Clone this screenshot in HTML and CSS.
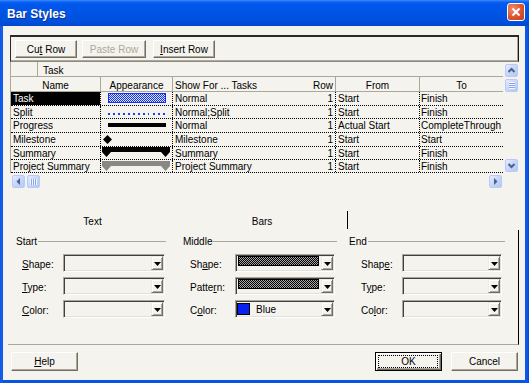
FILE: index.html
```html
<!DOCTYPE html>
<html>
<head>
<meta charset="utf-8">
<title>Bar Styles</title>
<link rel="stylesheet" href="styles.css">
</head>
<body>
<div class="window">
  <div class="titlebar">
    <span class="title">Bar Styles</span>
    <span class="close"><svg width="10" height="10" viewBox="0 0 10 10"><path d="M1.5 1.5L8.5 8.5M8.5 1.5L1.5 8.5" stroke="#fff" stroke-width="2" fill="none"/></svg></span>
  </div>
  <div class="client">
    <div class="toolbar">
      <div class="btn b-cut">Cu<u>t</u> Row</div>
      <div class="btn b-paste disabled">Paste Row</div>
      <div class="btn b-insert"><u>I</u>nsert Row</div>
    </div>

    <div class="gridwrap">
      <div class="grid">
        <div class="hrow">
          <div class="hc c-corner"></div>
          <div class="hc c-group">Task</div>
        </div>
        <div class="hrow">
          <div class="hc c-name center">Name</div>
          <div class="hc c-app center">Appearance</div>
          <div class="hc c-show noborder">Show For ... Tasks</div>
          <div class="hc c-row hright">Row</div>
          <div class="hc c-from center">From</div>
          <div class="hc c-to center noborder">To</div>
        </div>

        <div class="drow h14">
          <div class="dc c-name sel">Task</div>
          <div class="dc c-app"><div class="bar-task"></div></div>
          <div class="dc c-show noborder">Normal</div>
          <div class="dc c-row right">1</div>
          <div class="dc c-from">Start</div>
          <div class="dc c-to noborder">Finish</div>
        </div>
        <div class="drow">
          <div class="dc c-name">Split</div>
          <div class="dc c-app split"><div class="dots d1"></div><div class="dots d2"></div></div>
          <div class="dc c-show noborder">Normal;Split</div>
          <div class="dc c-row right">1</div>
          <div class="dc c-from">Start</div>
          <div class="dc c-to noborder">Finish</div>
        </div>
        <div class="drow h14">
          <div class="dc c-name">Progress</div>
          <div class="dc c-app"><div class="bar-progress"></div></div>
          <div class="dc c-show noborder">Normal</div>
          <div class="dc c-row right">1</div>
          <div class="dc c-from">Actual Start</div>
          <div class="dc c-to noborder">CompleteThrough</div>
        </div>
        <div class="drow h14">
          <div class="dc c-name">Milestone</div>
          <div class="dc c-app"><svg class="milestone" width="9" height="9" viewBox="0 0 9 9"><polygon points="4.5,0 9,4.5 4.5,9 0,4.5" fill="#000"/></svg></div>
          <div class="dc c-show noborder">Milestone</div>
          <div class="dc c-row right">1</div>
          <div class="dc c-from">Start</div>
          <div class="dc c-to noborder">Start</div>
        </div>
        <div class="drow">
          <div class="dc c-name">Summary</div>
          <div class="dc c-app"><svg class="summary" width="68" height="10" viewBox="0 0 68 10"><path d="M0 0H68V5L63.5 10L59 5H9L4.5 10L0 5Z" fill="#000"/></svg></div>
          <div class="dc c-show noborder">Summary</div>
          <div class="dc c-row right">1</div>
          <div class="dc c-from">Start</div>
          <div class="dc c-to noborder">Finish</div>
        </div>
        <div class="drow">
          <div class="dc c-name">Project Summary</div>
          <div class="dc c-app"><svg class="summary psum" width="68" height="10" viewBox="0 0 68 10"><path d="M0 0H68V5L63.5 10L59 5H9L4.5 10L0 5Z" fill="#8a8885"/></svg></div>
          <div class="dc c-show noborder">Project Summary</div>
          <div class="dc c-row right">1</div>
          <div class="dc c-from">Start</div>
          <div class="dc c-to noborder">Finish</div>
        </div>
      </div>

      <div class="vscroll">
        <div class="sb"><svg width="9" height="9" viewBox="0 0 9 9"><polyline points="1.5,6 4.5,3 7.5,6" stroke="#4d6185" stroke-width="2" fill="none"/></svg></div>
        <div class="sb thumb"><div class="grip-h"></div></div>
        <div class="track"></div>
        <div class="sb"><svg width="9" height="9" viewBox="0 0 9 9"><polyline points="1.5,3 4.5,6 7.5,3" stroke="#4d6185" stroke-width="2" fill="none"/></svg></div>
      </div>
    </div>

    <div class="hscroll">
      <div class="sb"><svg width="9" height="9" viewBox="0 0 9 9"><polygon points="6,1 2.5,4.5 6,8" fill="#4d6185"/></svg></div>
      <div class="sb thumb-h"><div class="grip-v"></div></div>
      <div class="track"></div>
      <div class="sb"><svg width="9" height="9" viewBox="0 0 9 9"><polygon points="3,1 6.5,4.5 3,8" fill="#4d6185"/></svg></div>
    </div>

    <div class="tabs">
      <div class="tab">Text</div>
      <div class="tab active">Bars</div>
    </div>

    <div class="panel">
      <div class="group g-start">
        <div class="gh"><span>Start</span></div>
        <div class="field"><span class="lab"><u>S</u>hape:</span><div class="combo"><div class="cval"></div><div class="cbtn"><svg width="7" height="4" viewBox="0 0 7 4"><polygon points="0,0 7,0 3.5,4" fill="#000"/></svg></div></div></div>
        <div class="field"><span class="lab"><u>T</u>ype:</span><div class="combo"><div class="cval"></div><div class="cbtn"><svg width="7" height="4" viewBox="0 0 7 4"><polygon points="0,0 7,0 3.5,4" fill="#000"/></svg></div></div></div>
        <div class="field"><span class="lab"><u>C</u>olor:</span><div class="combo"><div class="cval"></div><div class="cbtn"><svg width="7" height="4" viewBox="0 0 7 4"><polygon points="0,0 7,0 3.5,4" fill="#000"/></svg></div></div></div>
      </div>
      <div class="group g-mid">
        <div class="gh"><span>Middle</span></div>
        <div class="field"><span class="lab">Sh<u>a</u>pe:</span><div class="combo"><div class="cval"><div class="pat"></div></div><div class="cbtn"><svg width="7" height="4" viewBox="0 0 7 4"><polygon points="0,0 7,0 3.5,4" fill="#000"/></svg></div></div></div>
        <div class="field"><span class="lab">Patte<u>r</u>n:</span><div class="combo"><div class="cval"><div class="pat"></div></div><div class="cbtn"><svg width="7" height="4" viewBox="0 0 7 4"><polygon points="0,0 7,0 3.5,4" fill="#000"/></svg></div></div></div>
        <div class="field"><span class="lab">C<u>o</u>lor:</span><div class="combo"><div class="cval color"><span class="swatch"></span><span class="ctext">Blue</span></div><div class="cbtn"><svg width="7" height="4" viewBox="0 0 7 4"><polygon points="0,0 7,0 3.5,4" fill="#000"/></svg></div></div></div>
      </div>
      <div class="group g-end">
        <div class="gh"><span>End</span></div>
        <div class="field"><span class="lab">Shap<u>e</u>:</span><div class="combo"><div class="cval"></div><div class="cbtn"><svg width="7" height="4" viewBox="0 0 7 4"><polygon points="0,0 7,0 3.5,4" fill="#000"/></svg></div></div></div>
        <div class="field"><span class="lab">T<u>y</u>pe:</span><div class="combo"><div class="cval"></div><div class="cbtn"><svg width="7" height="4" viewBox="0 0 7 4"><polygon points="0,0 7,0 3.5,4" fill="#000"/></svg></div></div></div>
        <div class="field"><span class="lab">Co<u>l</u>or:</span><div class="combo"><div class="cval"></div><div class="cbtn"><svg width="7" height="4" viewBox="0 0 7 4"><polygon points="0,0 7,0 3.5,4" fill="#000"/></svg></div></div></div>
      </div>
    </div>

    <div class="footer">
      <div class="btn fbtn"><u>H</u>elp</div>
      <div class="fright">
        <div class="btn fbtn ok">OK</div>
        <div class="btn fbtn">Cancel</div>
      </div>
    </div>
  </div>
</div>
</body>
</html>
```

FILE: styles.css
```css
* { box-sizing: border-box; }
html, body { margin: 0; padding: 0; }
body {
  width: 529px;
  height: 383px;
  overflow: hidden;
  background: #0a54e4;
  font-family: "Liberation Sans", Arial, sans-serif;
  font-size: 10px;
  color: #000;
}
u { text-decoration: underline; text-underline-offset: 1px; }

.window {
  width: 529px;
  height: 383px;
  display: flex;
  flex-direction: column;
  background: linear-gradient(90deg, #0846d4 0, #1a66f4 1px, #0a54e4 3px, #0a54e4 525px, #0a5cf0 526px, #0848d6 529px);
}

/* title bar */
.titlebar {
  flex: none;
  height: 26px;
  display: flex;
  align-items: flex-start;
  padding-left: 7px;
  background: linear-gradient(180deg, #3a8cff 0, #0d62f3 2px, #0058ee 4px, #0054e3 14px, #0050dc 22px, #0046cf 26px);
}
.title {
  padding-top: 7px;
  line-height: 14px;
  font-size: 12px;
  font-weight: bold;
  color: #fff;
  text-shadow: 1px 1px 0 #10308f;
}
.close {
  margin-left: auto;
  margin-top: 3px;
  margin-right: 4px;
  width: 18px;
  height: 18px;
  border: 1px solid #fff;
  border-radius: 3px;
  background: radial-gradient(circle at 30% 30%, #ee8c6c 0, #db5431 55%, #c23b1d 100%);
  display: flex;
  align-items: center;
  justify-content: center;
}

/* client */
.client {
  flex: 1;
  margin: 0 4px 3px 3px;
  background: #f4f3ee;
  display: flex;
  flex-direction: column;
}

/* toolbar */
.toolbar {
  flex: none;
  margin: 9px 0 0 7px;
  width: 509px;
  height: 27px;
  border-style: solid;
  border-width: 2px 1px 1px 1px;
  border-color: #2a2a2a #1a1a1a #8d8b84 #2a2a2a;
  box-shadow: inset -1px -1px 0 #aca899;
  display: flex;
  padding: 3px 0 0 4px;
}
.btn {
  height: 18px;
  border: 1px solid;
  border-color: #fff #716f64 #716f64 #fff;
  box-shadow: inset -1px -1px 0 #aca899;
  background: #f4f3ee;
  text-align: center;
  padding-top: 1px;
  line-height: 15px;
  white-space: nowrap;
}
.b-cut { width: 62px; }
.b-paste { width: 64px; margin-left: 5px; }
.b-insert { width: 62px; margin-left: 7px; }
.disabled { color: #aca899; }

/* grid */
.gridwrap {
  flex: none;
  display: flex;
  margin-left: 7px;
  height: 111px;
}
.grid {
  width: 493px;
  border-left: 1px solid #aca899;
}
.hrow {
  display: flex;
  height: 15px;
  border-bottom: 1px solid #aca899;
}
.hc {
  flex: none;
  border-right: 1px solid #aca899;
  padding-top: 2px;
  line-height: 13px;
  white-space: nowrap;
}
.c-corner { width: 27px; }
.c-group { flex: 1; border-right: none; padding-left: 5px; }
.c-name { width: 90px; padding-left: 2px; }
.c-app { width: 72px; }
.c-show { width: 149px; padding-left: 2px; }
.c-row { width: 14px; padding-right: 2px; }
.c-from { width: 84px; padding-left: 2px; }
.c-to { width: 83px; padding-left: 1px; }
.center { text-align: center; padding-left: 0; }
.right { text-align: right; }
.hright { display: flex; justify-content: flex-end; }
.hc.noborder, .dc.noborder { border-right: none; }

.drow {
  display: flex;
  height: 13px;
  border-bottom: 1px dotted #000;
}
.drow.h14 { height: 14px; }
.dc {
  flex: none;
  border-right: 1px dotted #000;
  line-height: 14px;
  white-space: nowrap;
}
.sel {
  background: #000;
  background-clip: padding-box;
  color: #fff;
}

.bar-task {
  margin: 1px 0 0 7px;
  width: 58px;
  height: 10px;
  border: 1px solid #1a2ff0;
  background: repeating-conic-gradient(#1030f0 0 25%, #dfe4ff 0 50%) 0 0 / 2px 2px;
}
.split { display: flex; align-items: flex-start; }
.dots {
  margin-top: 7px;
  height: 2px;
  background: repeating-linear-gradient(90deg, #1f3cf6 0 2px, transparent 2px 5px);
}
.d1 { width: 41px; margin-left: 7px; }
.d2 { width: 12px; margin-left: 4px; }
.bar-progress {
  margin: 4px 0 0 7px;
  width: 58px;
  height: 4px;
  background: #000;
}
.milestone { display: block; margin: 2px 0 0 2px; }
.summary { display: block; margin: 0 0 0 1px; }
.psum { margin-top: 1px; }

/* scrollbars */
.vscroll {
  flex: none;
  width: 13px;
  margin: 2px 0 0 2px;
  height: 108px;
  display: flex;
  flex-direction: column;
}
.vscroll .track { flex: 1; }
.sb {
  flex: none;
  width: 13px;
  height: 13px;
  border: 1px solid #b8cbf7;
  border-radius: 2px;
  background: linear-gradient(135deg, #e6edfe 0, #c8d7fc 45%, #b4c8f6 100%);
  display: flex;
  align-items: center;
  justify-content: center;
}
.thumb { margin-top: 2px; }
.grip-h {
  width: 6px;
  height: 7px;
  background: repeating-linear-gradient(180deg, #f2f6ff 0 1px, #8ea5dc 1px 2px);
}
.hscroll {
  flex: none;
  margin: 2px 0 0 9px;
  width: 490px;
  height: 13px;
  display: flex;
}
.hscroll .track { flex: 1; }
.thumb-h { margin-left: 2px; }
.grip-v {
  width: 7px;
  height: 6px;
  background: repeating-linear-gradient(90deg, #f2f6ff 0 1px, #8ea5dc 1px 2px);
}

/* tabs */
.tabs {
  flex: none;
  display: flex;
  margin: 23px 0 0 5px;
  height: 19px;
}
.tab {
  width: 169px;
  height: 18px;
  text-align: center;
  padding-top: 4px;
  line-height: 13px;
}
.tab.active {
  width: 171px;
  height: 18px;
  border-right: 1px solid #000;
}

/* panel */
.panel {
  flex: none;
  margin-left: 5px;
  width: 511px;
  height: 115px;
  border-right: 1px solid #000;
  border-bottom: 1px solid #aca899;
  padding: 5px 0 0 8px;
  display: flex;
}
.group { flex: none; display: flex; flex-direction: column; }
.g-start { width: 150px; }
.g-mid { width: 154px; margin-left: 17px; }
.g-end { width: 156px; margin-left: 12px; }
.gh {
  height: 12px;
  display: flex;
  align-items: flex-start;
}
.gh span { line-height: 13px; white-space: nowrap; }
.gh::after {
  content: "";
  flex: 1;
  height: 1px;
  margin: 6px 0 0 1px;
  background: #aca899;
}
.field {
  display: flex;
  align-items: flex-start;
  height: 18px;
  margin-top: 5px;
}
.gh + .field { margin-top: 7px; }
.lab {
  flex: none;
  padding-top: 4px;
  line-height: 13px;
  white-space: nowrap;
}
.g-start .lab { width: 47px; padding-left: 6px; }
.g-mid .lab { width: 52px; padding-left: 7px; }
.g-end .lab { width: 53px; padding-left: 12px; }
.g-start .combo { width: 102px; }
.g-mid .combo { width: 100px; }
.g-end .combo { width: 100px; }

.combo {
  flex: none;
  height: 18px;
  border: 1px solid;
  border-color: #aca899 #fff #fff #aca899;
  box-shadow: inset 1px 1px 0 #404040, inset -1px -1px 0 #e2e0d8;
  padding: 1px;
  display: flex;
  background: #f4f3ee;
}
.cval { flex: 1; display: flex; align-items: flex-start; }
.cbtn {
  flex: none;
  width: 12px;
  height: 14px;
  border: 1px solid;
  border-color: #ecebe5 #716f64 #716f64 #ecebe5;
  box-shadow: inset 1px 1px 0 #fff, inset -1px -1px 0 #aca899;
  background: #f4f3ee;
  display: flex;
  align-items: center;
  justify-content: center;
}
.cbtn svg { display: block; margin-top: 1px; }
.pat {
  margin-left: 1px;
  width: 81px;
  height: 10px;
  border: 1px solid #000;
  background: repeating-conic-gradient(#000 0 25%, #a8a8a8 0 50%) 0 0 / 2px 2px;
}
.color { align-items: center; }
.swatch {
  flex: none;
  width: 13px;
  height: 12px;
  border: 1px solid #000;
  background: #0a22f0;
}
.ctext { margin-left: 6px; line-height: 13px; padding-top: 1px; }

/* footer */
.footer {
  flex: none;
  display: flex;
  justify-content: space-between;
  margin-top: 7px;
  padding: 0 7px 0 8px;
  height: 19px;
}
.fright { display: flex; gap: 9px; }
.fbtn {
  width: 67px;
  height: 19px;
  padding-top: 1px;
  line-height: 16px;
}
.ok {
  position: relative;
  border: 1px solid #000;
  box-shadow: inset 1px 1px 0 #fff, inset -1px -1px 0 #716f64, inset -2px -2px 0 #aca899;
}
.ok::before {
  content: "";
  position: absolute;
  left: 2px;
  right: 3px;
  top: 2px;
  bottom: 2px;
  border: 1px dotted #000;
}
```
